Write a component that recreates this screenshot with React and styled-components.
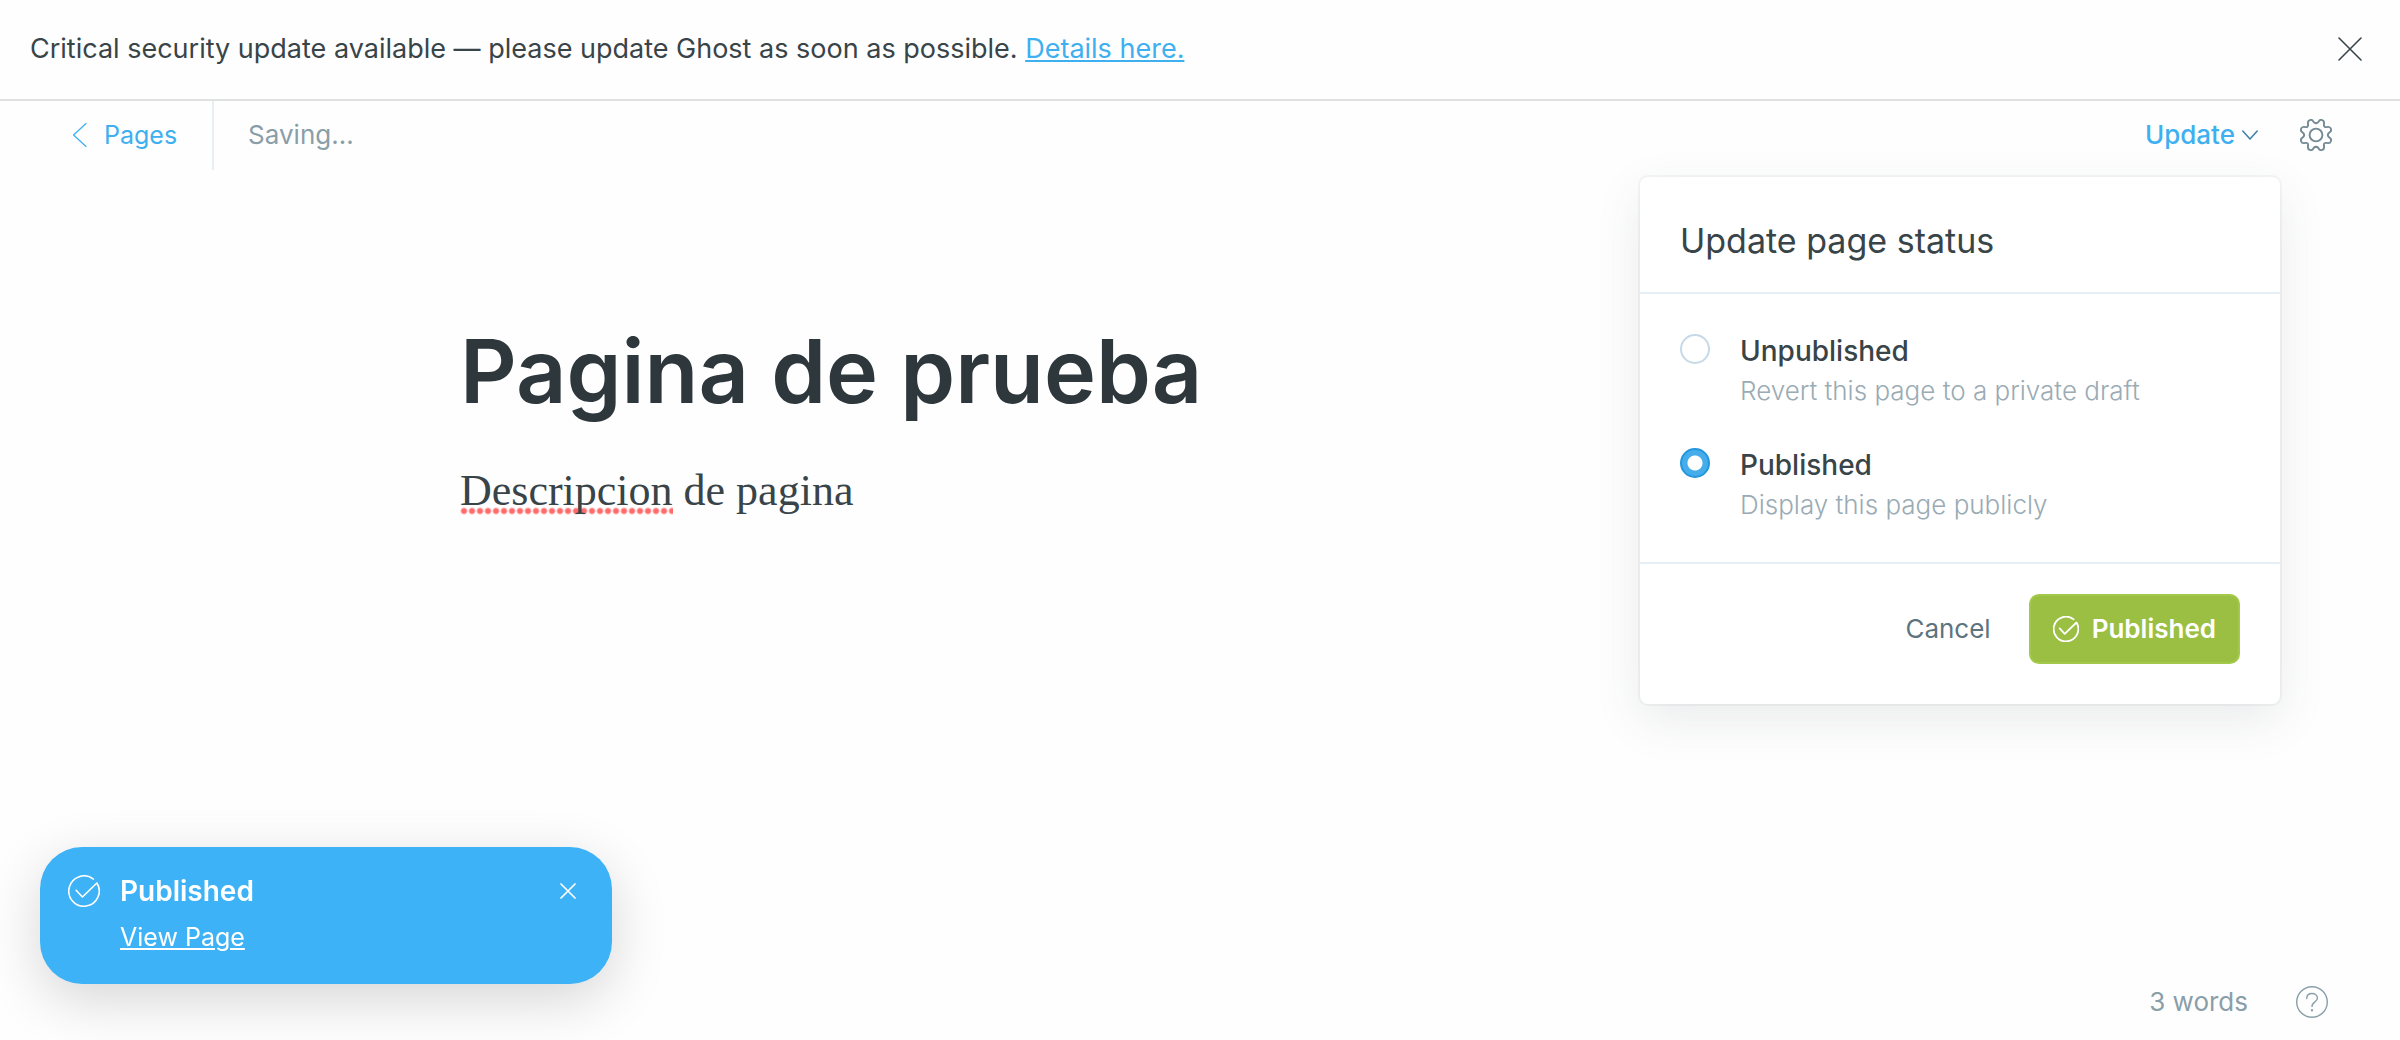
import React, { useState } from "react";
import styled, { createGlobalStyle } from "styled-components";

const color = {
  ink: "#2d373c",
  text: "#394449",
  mid: "#5d7480",
  soft: "#8a9ea9",
  faint: "#9aabb4",
  blue: "#3eb0ef",
  line: "#e5eff5",
  green: "#9bbf43",
};

const GlobalStyle = createGlobalStyle`
  *, *::before, *::after { box-sizing: border-box; }
  body {
    margin: 0;
    background: #fefefe;
    color: ${color.text};
    font-family: Inter, "Liberation Sans", sans-serif;
    font-size: 26px;
    line-height: 40px;
  }
  button, input { font: inherit; color: inherit; }
  svg { display: block; flex: none; }
`;

const Page = styled.div`
  min-height: 100vh;
  display: flex;
  flex-direction: column;
`;

const PlainButton = styled.button`
  display: flex;
  align-items: center;
  padding: 0;
  border: 0;
  background: none;
  cursor: pointer;
`;

const Banner = styled.aside`
  display: flex;
  align-items: center;
  justify-content: space-between;
  padding: 29px 38px 30px 30px;
  border-bottom: 2px solid #dfe1e1;
  font-size: 27px;
`;

const BannerText = styled.p`
  margin: 0;
`;

const BannerLink = styled.a`
  color: ${color.blue};
  text-decoration: underline;
  text-decoration-thickness: 2px;
  text-underline-offset: 2px;
`;

const Toolbar = styled.header`
  display: flex;
  align-items: stretch;
  height: 69px;
  padding-right: 68px;
`;

const BackLink = styled.a`
  display: flex;
  align-items: center;
  gap: 17px;
  padding: 0 35px 2px 72px;
  border-right: 2px solid ${color.line};
  color: ${color.blue};
  font-size: 25px;
  text-decoration: none;
`;

const SaveState = styled.div`
  display: flex;
  align-items: center;
  flex: 1;
  padding: 0 0 2px 34px;
  color: ${color.soft};
`;

const MenuAnchor = styled.div`
  position: relative;
  display: flex;
  margin-right: 18px;
`;

const UpdateButton = styled(PlainButton)`
  gap: 7px;
  padding: 0 24px 2px;
  color: ${color.blue};
  font-weight: 500;
`;

const SettingsButton = styled(PlainButton)`
  padding-bottom: 2px;
  color: #738a94;
`;

const Popover = styled.form`
  position: absolute;
  z-index: 2;
  top: 76px;
  right: 2px;
  width: 640px;
  border-radius: 8px;
  background: #fff;
  box-shadow: 0 0 0 2px rgba(60, 70, 75, 0.05), 0 16px 48px rgba(60, 70, 75, 0.1);
`;

const PopoverTitle = styled.h2`
  margin: 0;
  padding: 40px 40px 27px;
  border-bottom: 2px solid ${color.line};
  font-size: 34px;
  font-weight: 400;
  line-height: 48px;
`;

const Options = styled.div`
  display: flex;
  flex-direction: column;
  gap: 34px;
  padding: 37px 40px;
  border-bottom: 2px solid ${color.line};
`;

const Option = styled.div`
  display: flex;
  align-items: flex-start;
  gap: 30px;
`;

const Radio = styled.input`
  appearance: none;
  flex: none;
  width: 30px;
  height: 30px;
  margin: 3px 0 0;
  border: 2px solid #c5d9e8;
  border-radius: 50%;
  background: #fff;

  &:checked {
    border-color: #2497dc;
    background: radial-gradient(circle, #fff 7px, #45adec 8px);
  }
`;

const OptionLabel = styled.label`
  display: flex;
  flex-direction: column;
`;

const OptionName = styled.span`
  font-size: 28px;
  font-weight: 500;
`;

const OptionNote = styled.span`
  color: ${color.faint};
  font-weight: 300;
`;

const Actions = styled.div`
  display: flex;
  justify-content: flex-end;
  align-items: center;
  gap: 38px;
  padding: 30px 40px 40px;
`;

const CancelButton = styled(PlainButton)`
  color: ${color.mid};
`;

const PublishButton = styled(PlainButton)`
  gap: 13px;
  height: 70px;
  padding: 0 22px;
  border: 2px solid #a3c94a;
  border-radius: 10px;
  background: ${color.green};
  color: #fff;
  font-weight: 600;
`;

const Editor = styled.main`
  flex: 1;
  width: 100%;
  max-width: 1480px;
  margin: 0 auto;
  padding-top: 140px;
`;

const TitleInput = styled.input`
  display: block;
  width: 100%;
  height: 122px;
  padding: 0;
  border: 0;
  outline: 0;
  background: none;
  color: ${color.ink};
  font-size: 88px;
  font-weight: 600;
`;

const Body = styled.div`
  margin-top: 27px;
  outline: 0;
  font-family: "Liberation Serif", serif;
  font-size: 44px;
  line-height: 64px;
`;

const Paragraph = styled.p`
  margin: 0;
`;

const Misspelled = styled.span`
  background: radial-gradient(circle, #ff6b6b 2px, transparent 4px) left bottom / 8px 8px repeat-x;
`;

const StatusBar = styled.footer`
  display: flex;
  align-items: center;
  justify-content: flex-end;
  gap: 48px;
  padding: 0 72px 18px;
  color: ${color.soft};
`;

const Toast = styled.section`
  position: fixed;
  z-index: 3;
  left: 40px;
  bottom: 56px;
  display: grid;
  grid-template-columns: 32px 1fr 16px;
  column-gap: 20px;
  row-gap: 6px;
  align-items: center;
  width: 572px;
  padding: 24px 36px 27px 28px;
  border-radius: 42px;
  background: #3eb2f6;
  box-shadow: 0 16px 56px rgba(0, 0, 0, 0.16);
  color: #fff;
`;

const ToastTitle = styled.strong`
  font-size: 28px;
  font-weight: 600;
`;

const ToastLink = styled.a`
  grid-column: 2;
  justify-self: start;
  color: inherit;
  font-size: 25px;
  text-decoration: underline;
  text-decoration-thickness: 2px;
  text-underline-offset: 2px;
`;

const CrossIcon = ({ size, stroke }) => (
  <svg width={size} height={size} viewBox={`0 0 ${size} ${size}`} fill="none" stroke="currentColor" strokeWidth={stroke} strokeLinecap="round" aria-hidden="true">
    <path d={`M1 1L${size - 1} ${size - 1}M${size - 1} 1L1 ${size - 1}`} />
  </svg>
);

const BackIcon = () => (
  <svg width="15" height="24" viewBox="0 0 15 24" fill="none" stroke="currentColor" strokeWidth="1.3" strokeLinecap="round" strokeLinejoin="round" aria-hidden="true">
    <path d="M14 .6L1.6 12L14 23.4" />
  </svg>
);

const DownIcon = () => (
  <svg width="16" height="10" viewBox="0 0 16 10" fill="none" stroke="#3b7fa8" strokeWidth="1.5" strokeLinecap="round" strokeLinejoin="round" aria-hidden="true">
    <path d="M.8 1L8 9L15.2 1" />
  </svg>
);

const CogIcon = () => (
  <svg width="32" height="32" viewBox="-16 -16 32 32" fill="none" stroke="currentColor" strokeWidth="1.9" strokeLinecap="round" aria-hidden="true">
    <circle r="6.4" />
    {[0, 90, 180, 270].map((angle) => (
      <path
        key={angle}
        transform={`rotate(${angle})`}
        d="M0-11.8C1.4-11.8 2.2-12.6 2.9-13.8C3.5-15 4.8-15.3 6.2-14.9C7.6-14.4 8.2-13.5 8.1-12.1L7.9-10.2C7.8-8.7 8.7-7.8 10.2-7.9L12.1-8.1C13.5-8.2 14.4-7.6 14.9-6.2C15.3-4.8 15-3.5 13.8-2.9C12.6-2.2 11.8-1.4 11.8 0"
      />
    ))}
  </svg>
);

const CheckIcon = ({ size, stroke }) => (
  <svg width={size} height={size} viewBox="-16 -16 32 32" fill="none" stroke="currentColor" strokeWidth={stroke} strokeLinecap="round" strokeLinejoin="round" aria-hidden="true">
    <path d="M9.4-11.9A15.2 15.2 0 1 0 12.9-8L-1.6 6L-7.8-.7" />
  </svg>
);

const HelpIcon = () => (
  <svg width="32" height="32" viewBox="0 0 32 32" fill="none" stroke="currentColor" strokeWidth="1.4" strokeLinecap="round" aria-hidden="true">
    <circle cx="16" cy="16" r="15.3" />
    <path d="M10.7 12.6C10.7 9.4 13 7.5 16 7.5S21.4 9.4 21.4 12.2C21.4 16.2 16 15.6 16 20.4" />
    <circle cx="16" cy="24.3" r=".5" fill="currentColor" />
  </svg>
);

const statuses = [
  { id: "unpublished", name: "Unpublished", note: "Revert this page to a private draft" },
  { id: "published", name: "Published", note: "Display this page publicly" },
];

export default function App() {
  const [status, setStatus] = useState("published");
  const [title, setTitle] = useState("Pagina de prueba");

  return (
    <Page>
      <GlobalStyle />
      <Banner>
        <BannerText>
          Critical security update available — please update Ghost as soon as possible.{" "}
          <BannerLink href="#details">Details here.</BannerLink>
        </BannerText>
        <PlainButton type="button" aria-label="Close">
          <CrossIcon size={24} stroke={1.6} />
        </PlainButton>
      </Banner>

      <Toolbar>
        <BackLink href="#pages">
          <BackIcon />
          Pages
        </BackLink>
        <SaveState>Saving...</SaveState>
        <MenuAnchor>
          <UpdateButton type="button" aria-expanded="true">
            Update
            <DownIcon />
          </UpdateButton>
          <Popover onSubmit={(event) => event.preventDefault()}>
            <PopoverTitle>Update page status</PopoverTitle>
            <Options role="radiogroup" aria-label="Page status">
              {statuses.map(({ id, name, note }) => (
                <Option key={id}>
                  <Radio type="radio" name="status" id={id} checked={status === id} onChange={() => setStatus(id)} />
                  <OptionLabel htmlFor={id}>
                    <OptionName>{name}</OptionName>
                    <OptionNote>{note}</OptionNote>
                  </OptionLabel>
                </Option>
              ))}
            </Options>
            <Actions>
              <CancelButton type="button">Cancel</CancelButton>
              <PublishButton type="submit">
                <CheckIcon size={26} stroke={2.2} />
                Published
              </PublishButton>
            </Actions>
          </Popover>
        </MenuAnchor>
        <SettingsButton type="button" aria-label="Settings">
          <CogIcon />
        </SettingsButton>
      </Toolbar>

      <Editor>
        <TitleInput aria-label="Page title" spellCheck={false} value={title} onChange={(event) => setTitle(event.target.value)} />
        <Body contentEditable suppressContentEditableWarning spellCheck={false} role="textbox" aria-label="Page content">
          <Paragraph>
            <Misspelled>Descripcion</Misspelled> de pagina
          </Paragraph>
        </Body>
      </Editor>

      <StatusBar>
        <span>3 words</span>
        <PlainButton type="button" aria-label="Help">
          <HelpIcon />
        </PlainButton>
      </StatusBar>

      <Toast role="status">
        <CheckIcon size={32} stroke={1.6} />
        <ToastTitle>Published</ToastTitle>
        <PlainButton type="button" aria-label="Dismiss">
          <CrossIcon size={16} stroke={1.7} />
        </PlainButton>
        <ToastLink href="#view">View Page</ToastLink>
      </Toast>
    </Page>
  );
}
